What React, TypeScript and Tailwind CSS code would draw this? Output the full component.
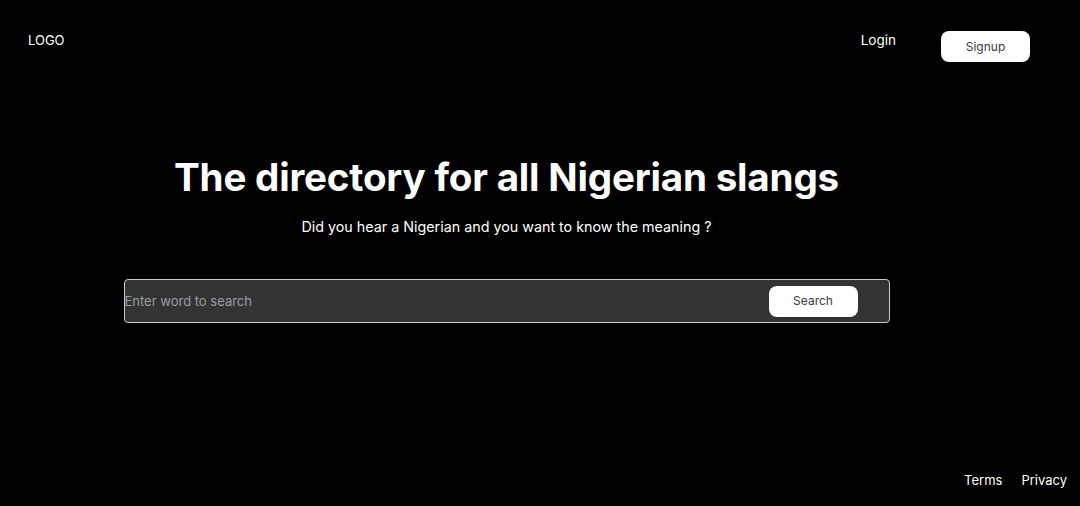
import React, { useState } from "react";

const Navbar = () => {
  return (
    <nav className="flex items-center justify-between pl-[28px] pr-[50px] pt-[31px]">
      <span className="-mt-[12px] text-[13px] text-white">LOGO</span>
      <div className="flex items-center gap-[45px]">
        <a href="#" className="-mt-[12px] text-[13.5px] text-white">
          Login
        </a>
        <button className="h-[31px] w-[89px] rounded-lg bg-white text-[12px] text-[#3a3a3a]">
          Signup
        </button>
      </div>
    </nav>
  );
};

const SearchBar = () => {
  const [query, setQuery] = useState("");

  return (
    <div className="flex h-[44px] w-[766px] items-center rounded border border-[#c9c9c9] bg-[#333333] pr-[31px]">
      <input
        value={query}
        onChange={(e) => setQuery(e.target.value)}
        placeholder="Enter word to search"
        className="h-full flex-1 bg-transparent text-[13px] text-white placeholder:text-[#9a9ea6] focus:outline-none"
      />
      <button className="h-[31px] w-[89px] rounded-lg bg-white text-[12px] text-[#3a3a3a]">
        Search
      </button>
    </div>
  );
};

export default function App() {
  return (
    <div
      className="relative flex h-[506px] w-full flex-col bg-black text-white"
      style={{ fontFamily: "Inter, 'Noto Sans', sans-serif" }}
    >
      <Navbar />

      <main className="flex flex-col items-center pr-[67px] pt-[91px]">
        <h1 className="text-[38.6px] font-bold leading-[48px] tracking-[-0.2px]">
          The directory for all Nigerian slangs
        </h1>
        <p className="mt-[15px] text-[14.3px]">
          Did you hear a Nigerian and you want to know the meaning ?
        </p>
        <div className="mt-[42px]">
          <SearchBar />
        </div>
      </main>

      <footer className="mt-auto flex justify-end gap-[19px] pb-[16px] pr-[13px] text-[13px]">
        <a href="#">Terms</a>
        <a href="#">Privacy</a>
      </footer>
    </div>
  );
}
